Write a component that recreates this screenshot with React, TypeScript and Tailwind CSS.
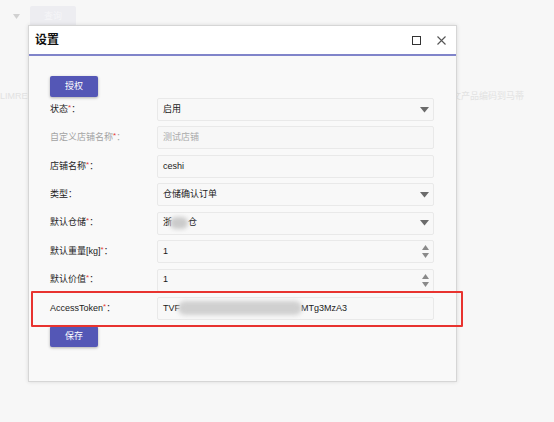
import React from "react";

const font = { fontFamily: '"Liberation Sans", "Noto Sans CJK SC", sans-serif' };

function Caret() {
  return (
    <svg width="9" height="6" viewBox="0 0 9 6" className="shrink-0">
      <path d="M0 0 L9 0 L4.5 5.5 Z" fill="#6b6b6b" />
    </svg>
  );
}

function Spinner() {
  return (
    <div className="flex flex-col gap-[3px] items-center">
      <svg width="7" height="5" viewBox="0 0 7 5">
        <path d="M0 5 L7 5 L3.5 0 Z" fill="#8a8a8a" />
      </svg>
      <svg width="7" height="5" viewBox="0 0 7 5">
        <path d="M0 0 L7 0 L3.5 5 Z" fill="#8a8a8a" />
      </svg>
    </div>
  );
}

function Req() {
  return <span className="text-[#e53935] relative top-[-2px] text-[8px]">*</span>;
}

function Row({
  label,
  req,
  disabled,
  children,
  right,
}: {
  label: React.ReactNode;
  req?: boolean;
  disabled?: boolean;
  children: React.ReactNode;
  right?: React.ReactNode;
}) {
  return (
    <div className="flex items-center h-[23px]">
      <div
        className={`w-[107px] shrink-0 text-[9px] ${disabled ? "text-[#a3a3a3]" : "text-[#222]"}`}
      >
        {label}
        {req && <Req />}
        <span>：</span>
      </div>
      <div
        className={`w-[277px] h-[23px] border border-[#e9e9e9] rounded-[2px] flex items-center justify-between pl-[5px] pr-[4px] text-[9px] ${
          disabled ? "bg-[#f7f7f7] text-[#ababab]" : "bg-[#f8f8f8] text-[#1a1a1a]"
        }`}
      >
        <div className="flex items-center">{children}</div>
        {right}
      </div>
    </div>
  );
}

export default function App() {
  return (
    <div className="w-[554px] h-[422px] bg-[#f7f7f7] relative overflow-hidden" style={font}>
      {/* faded background page */}
      <div className="flex items-center h-[29px] pt-[4px]">
        <div className="w-[30px] flex justify-center opacity-40 pl-[3px]">
          <svg width="7" height="5" viewBox="0 0 7 5">
            <path d="M0 0 L7 0 L3.5 5 Z" fill="#999" />
          </svg>
        </div>
        <div className="w-[46px] h-[21px] bg-[#ededf1] rounded-[2px] flex items-center justify-center text-[9px] text-[#f6f6f8]">
          查询
        </div>
      </div>
      <div className="flex justify-between items-center mt-[61px] text-[9px] text-[#e2e2e2]">
        <span>LIMREF</span>
        <span className="pr-[30px]">文产品编码到马蒂</span>
      </div>

      {/* modal window */}
      <div className="absolute left-[28px] top-[25px] w-[429px] h-[357px] border border-[#d6d6d6] bg-[#f9f9f9] shadow-[0_0_4px_rgba(0,0,0,0.12)] flex flex-col">
        <div className="h-[30px] bg-white border-b-2 border-[#8084ca] flex items-center justify-between pl-[6px] pr-[10px] shrink-0">
          <span className="text-[12px] font-bold text-[#111]">设置</span>
          <div className="flex items-center gap-[16px]">
            <div className="w-[9px] h-[9px] border-[1.5px] border-[#333]" />
            <svg width="9" height="9" viewBox="0 0 9 9">
              <path d="M0.5 0.5 L8.5 8.5 M8.5 0.5 L0.5 8.5" stroke="#555" strokeWidth="1.1" />
            </svg>
          </div>
        </div>
        <div className="pl-[21px] pt-[20px] flex flex-col">
          <button className="w-[48px] h-[21px] bg-[#5457b6] rounded-[2px] text-white text-[9px] shadow-[0_1px_3px_rgba(0,0,0,0.3)]">
            授权
          </button>
          <div className="flex flex-col gap-[5.43px] mt-[1px]">
            <Row label="状态" req right={<Caret />}>
              启用
            </Row>
            <Row label="自定义店铺名称" req disabled>
              测试店铺
            </Row>
            <Row label="店铺名称" req>
              ceshi
            </Row>
            <Row label="类型" right={<Caret />}>
              仓储确认订单
            </Row>
            <Row label="默认仓储" req right={<Caret />}>
              <span>浙</span>
              <span className="inline-block w-[18px] h-[12px] rounded-[6px] bg-[#cbcbcb] blur-[2px] -ml-[2px]" />
              <span>仓</span>
            </Row>
            <Row label="默认重量[kg]" req right={<Spinner />}>
              1
            </Row>
            <Row label="默认价值" req right={<Spinner />}>
              1
            </Row>
            <Row label="AccessToken" req>
              <span>TVF</span>
              <span className="inline-block w-[124px] h-[14px] rounded-[7px] bg-[#d0d0d0] blur-[2px] -ml-[2px]" />
              <span className="-ml-[1px]">MTg3MzA3</span>
            </Row>
          </div>
          <button className="mt-[6px] w-[48px] h-[21px] bg-[#5457b6] rounded-[2px] text-white text-[9px] shadow-[0_1px_3px_rgba(0,0,0,0.3)]">
            保存
          </button>
        </div>
      </div>

      {/* red annotation box */}
      <div className="absolute left-[31px] top-[291px] w-[432px] h-[36px] border-2 border-[#e8332f] rounded-[1px]" />
    </div>
  );
}
